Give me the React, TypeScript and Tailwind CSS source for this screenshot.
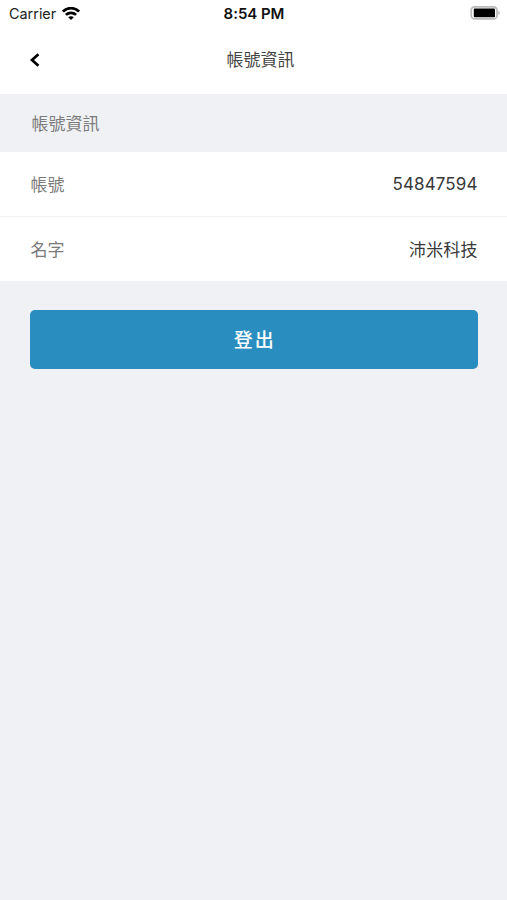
import React from 'react';

const rows = [
  { label: '帳號', value: '54847594' },
  { label: '名字', value: '沛米科技' },
];

const WifiIcon = () => (
  <svg className="h-[14px] w-[18px]" viewBox="0 0 18 14" fill="none" stroke="black" strokeWidth="2.7">
    <path d="M0.9 4.6C5.4 0 12.6 0 17.1 4.6" />
    <path d="M3.9 7.9C6.8 5.1 11.2 5.1 14.1 7.9" />
    <path d="M9 12.9L6.2 10.2C7.8 8.8 10.2 8.8 11.8 10.2Z" fill="black" stroke="none" />
  </svg>
);

const BatteryIcon = () => (
  <svg className="h-[14px] w-[30px]" viewBox="0 0 30 14" fill="none">
    <rect x="1.2" y="0.9" width="25.8" height="12" rx="3.4" stroke="#bbb" strokeWidth="1.7" />
    <rect x="3.8" y="2.6" width="21.2" height="8.7" rx="0.8" fill="black" />
    <path d="M28.3 4.6C30.3 5.6 30.3 8.2 28.3 9.2Z" fill="#bbb" />
  </svg>
);

const StatusBar = () => (
  <div className="grid h-7 grid-cols-3 items-center pl-[9px] pr-[7px] text-[15px] text-[#111]">
    <div className="flex items-center gap-[6px]">
      <span className="text-[14.4px] text-[#222]">Carrier</span>
      <WifiIcon />
    </div>
    <span className="pr-[1px] text-center font-semibold tracking-[-0.05px]">8:54 PM</span>
    <div className="flex justify-end pb-[2px]">
      <BatteryIcon />
    </div>
  </div>
);

export default function App() {
  return (
    <div className="min-h-screen bg-[#eff1f5] font-['Inter','Noto_Sans_CJK_TC',sans-serif] text-[17px]">
      <header className="h-[94px] bg-white">
        <StatusBar />
        <div className="flex h-16 items-center">
          <button className="w-11 pl-[29px]" aria-label="Back">
            <svg className="h-[14px] w-[11px]" viewBox="0 0 11 14" fill="none" stroke="black" strokeWidth="2.7">
              <path d="M9.4 1.2L3 7L9.4 12.8" />
            </svg>
          </button>
          <h1 className="flex-1 pr-[30px] pt-[2px] text-center text-[#444]">帳號資訊</h1>
        </div>
      </header>

      <h2 className="flex h-[58px] items-center pl-[31.5px] pt-[3px] text-[#7b7b7b]">帳號資訊</h2>

      <div className="divide-y divide-[#f2f3f5] bg-white">
        {rows.map(row => (
          <div key={row.label} className="group flex h-16 items-center justify-between pl-[30.5px] pr-[29.5px] pt-[3px] first:h-[65px]">
            <span className="text-[#7b7b7b]">{row.label}</span>
            <span className="tracking-[0.1px] text-[#383838] group-first:pb-[2px]">{row.value}</span>
          </div>
        ))}
      </div>

      <div className="pl-[30px] pr-[29.5px] pt-[29px]">
        <button className="h-[59px] w-full rounded-[5px] bg-[#2a8dbf] pl-[2px] pt-[4px] text-[19px] font-medium tracking-[2px] text-white">
          登出
        </button>
      </div>
    </div>
  );
}
